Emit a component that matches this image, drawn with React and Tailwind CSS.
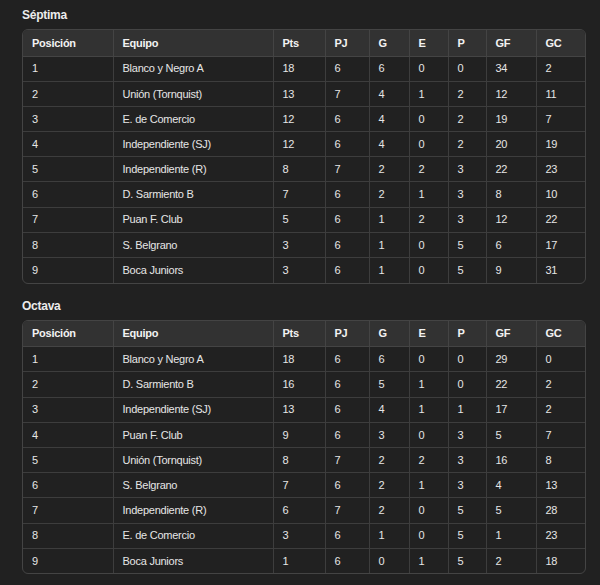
const cols = [
  { label: "Posición", w: "w-[90px]" },
  { label: "Equipo", w: "w-[160px]" },
  { label: "Pts", w: "w-[52px]" },
  { label: "PJ", w: "w-[44px]" },
  { label: "G", w: "w-[40px]" },
  { label: "E", w: "w-[39px]" },
  { label: "P", w: "w-[38px]" },
  { label: "GF", w: "w-[50px]" },
  { label: "GC", w: "w-[51px]" },
];

const septima = [
  [1, "Blanco y Negro A", 18, 6, 6, 0, 0, 34, 2],
  [2, "Unión (Tornquist)", 13, 7, 4, 1, 2, 12, 11],
  [3, "E. de Comercio", 12, 6, 4, 0, 2, 19, 7],
  [4, "Independiente (SJ)", 12, 6, 4, 0, 2, 20, 19],
  [5, "Independiente (R)", 8, 7, 2, 2, 3, 22, 23],
  [6, "D. Sarmiento B", 7, 6, 2, 1, 3, 8, 10],
  [7, "Puan F. Club", 5, 6, 1, 2, 3, 12, 22],
  [8, "S. Belgrano", 3, 6, 1, 0, 5, 6, 17],
  [9, "Boca Juniors", 3, 6, 1, 0, 5, 9, 31],
];

const octava = [
  [1, "Blanco y Negro A", 18, 6, 6, 0, 0, 29, 0],
  [2, "D. Sarmiento B", 16, 6, 5, 1, 0, 22, 2],
  [3, "Independiente (SJ)", 13, 6, 4, 1, 1, 17, 2],
  [4, "Puan F. Club", 9, 6, 3, 0, 3, 5, 7],
  [5, "Unión (Tornquist)", 8, 7, 2, 2, 3, 16, 8],
  [6, "S. Belgrano", 7, 6, 2, 1, 3, 4, 13],
  [7, "Independiente (R)", 6, 7, 2, 0, 5, 5, 28],
  [8, "E. de Comercio", 3, 6, 1, 0, 5, 1, 23],
  [9, "Boca Juniors", 1, 6, 0, 1, 5, 2, 18],
];

function Standings({ title, rows }) {
  return (
    <section>
      <h3 className="text-[12px] leading-[18px] font-bold text-[#ececec] mb-[5px]">{title}</h3>
      <div className="w-[564px] border border-[#444] rounded-[6px] overflow-hidden">
        <table className="w-full table-fixed border-collapse">
          <thead>
            <tr className="bg-[#323232]">
              {cols.map((c, i) => (
                <th
                  key={c.label}
                  className={`${c.w} h-[26px] px-[9px] text-left font-bold text-[#f2f2f2] border-b border-[#444] ${
                    i < cols.length - 1 ? "border-r" : ""
                  }`}
                >
                  {c.label}
                </th>
              ))}
            </tr>
          </thead>
          <tbody>
            {rows.map((r, ri) => (
              <tr key={ri}>
                {r.map((v, i) => (
                  <td
                    key={i}
                    className={`h-[25.2px] px-[9px] text-[#e6e6e6] border-[#3d3d3d] ${
                      i < r.length - 1 ? "border-r" : ""
                    } ${ri < rows.length - 1 ? "border-b" : ""}`}
                  >
                    {v}
                  </td>
                ))}
              </tr>
            ))}
          </tbody>
        </table>
      </div>
    </section>
  );
}

export default function App() {
  return (
    <div className="min-h-[585px] bg-[#212121] px-[22px] pt-[6px] text-[11px] tracking-[-0.25px] font-['Liberation_Sans',Arial,sans-serif] flex flex-col gap-[13px]">
      <Standings title="Séptima" rows={septima} />
      <Standings title="Octava" rows={octava} />
    </div>
  );
}
